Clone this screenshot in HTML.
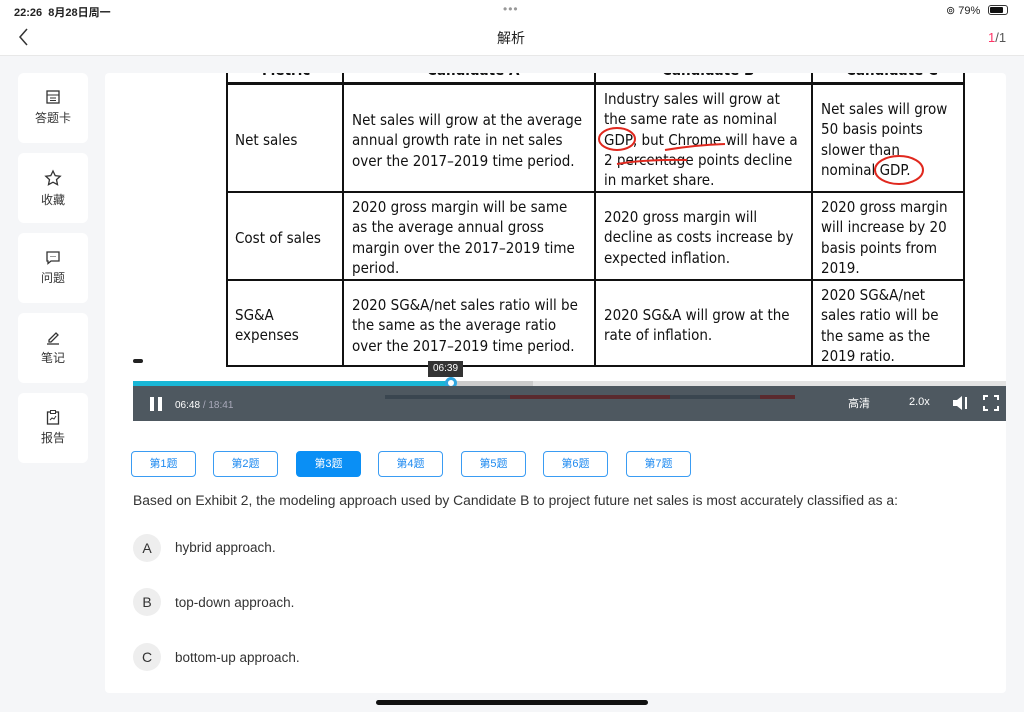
<!DOCTYPE html>
<html><head><meta charset="utf-8"><style>
*{margin:0;padding:0;box-sizing:border-box}
body{width:1024px;height:712px;background:#f5f6f8;font-family:"Liberation Sans","Noto Sans CJK SC",sans-serif;position:relative;overflow:hidden;color:#222}
.a{position:absolute}
.hdr{left:0;top:0;width:1024px;height:56px;background:#fff;border-bottom:1px solid #e8e8e8}
.side{left:18px;width:70px;height:70px;background:#fff;border-radius:6px;text-align:center;font-size:12px;color:#333}
.side svg{display:block;margin:16px auto 4px}
.card{left:105px;top:73px;width:901px;height:620px;background:#fff;border-radius:4px}
.clip{left:0;top:73px;width:1024px;height:300px;overflow:hidden}
.t{font-family:"DejaVu Sans Condensed","Liberation Sans Narrow","Liberation Sans",sans-serif;font-size:15px;line-height:20.3px;color:#111;white-space:nowrap}
.ln{background:#111}
.btn{top:451px;width:65px;height:26px;border:1px solid #3a9cf3;border-radius:4px;color:#1e8af0;font-size:11px;text-align:center;line-height:24px}
.opt{left:133px;width:28px;height:28px;border-radius:14px;background:#eee;text-align:center;line-height:28px;font-size:14px;color:#333}
.ot{left:175px;font-size:13.5px;color:#333}
</style></head><body>
<div class="a hdr"></div>
<div class="a" style="left:14px;top:4px;font-size:11px;font-weight:bold">22:26&nbsp; 8月28日周一</div>
<div class="a" style="left:503px;top:2px;font-size:12px;color:#999;letter-spacing:1px">•••</div>
<div class="a" style="left:946px;top:4px;font-size:11px">⊚ 79%</div>
<div class="a" style="left:988px;top:5px;width:20px;height:10px;border:1px solid #333;border-radius:3px"><div style="margin:1px;width:13px;height:6px;background:#111;border-radius:1px"></div></div>
<svg class="a" style="left:18px;top:28px" width="12" height="18"><path d="M9 1L2 9l7 8" stroke="#333" stroke-width="1.5" fill="none"/></svg>
<div class="a" style="left:497px;top:28px;font-size:14px">解析</div>
<div class="a" style="left:988px;top:30px;font-size:13px;color:#555"><span style="color:#f36">1</span>/1</div>

<div class="a side" style="top:73px"><svg width="16" height="16"><rect x="2" y="2" width="12" height="12" fill="none" stroke="#333" stroke-width="1.3"/><path d="M2 6h12M5 9h6M5 11.5h6" stroke="#333"/></svg>答题卡</div>
<div class="a side" style="top:153px"><svg width="18" height="18"><path d="M9 2l2.2 4.6 5 .6-3.7 3.4 1 5L9 13.2 4.5 15.6l1-5L1.8 7.2l5-.6z" fill="none" stroke="#333" stroke-width="1.3"/></svg>收藏</div>
<div class="a side" style="top:233px"><svg width="16" height="16"><path d="M2 3h12v9H6l-3 2.5V12H2z" fill="none" stroke="#333" stroke-width="1.3"/><path d="M5.5 7.5h1M7.5 7.5h1M9.5 7.5h1" stroke="#333"/></svg>问题</div>
<div class="a side" style="top:313px"><svg width="16" height="16"><path d="M4 11l7-7 2 2-7 7H4z" fill="none" stroke="#333" stroke-width="1.3"/><path d="M2 15h12" stroke="#333" stroke-width="1.3"/></svg>笔记</div>
<div class="a side" style="top:393px"><svg width="16" height="16"><rect x="2.5" y="3" width="11" height="12" fill="none" stroke="#333" stroke-width="1.3"/><rect x="5.5" y="1.5" width="5" height="3" fill="#fff" stroke="#333"/><path d="M5 11l2-2 2 1 2-3" stroke="#333" fill="none"/></svg>报告</div>

<div class="a card"></div>
<div class="a clip"><div class="a" style="left:0;top:-73px;width:1024px;height:400px">
<div class="a ln" style="left:226px;top:60px;width:2px;height:307px"></div>
<div class="a ln" style="left:963px;top:60px;width:2px;height:307px"></div>
<div class="a ln" style="left:342px;top:60px;width:2px;height:307px"></div>
<div class="a ln" style="left:594px;top:60px;width:2px;height:307px"></div>
<div class="a ln" style="left:811px;top:60px;width:2px;height:307px"></div>
<div class="a ln" style="left:226px;top:82px;width:739px;height:3px"></div>
<div class="a ln" style="left:226px;top:191px;width:739px;height:2px"></div>
<div class="a ln" style="left:226px;top:279px;width:739px;height:2px"></div>
<div class="a ln" style="left:226px;top:365px;width:739px;height:2px"></div>
<div class="a t" style="left:262px;top:60px;font-weight:bold">Metric</div>
<div class="a t" style="left:427px;top:60px;font-weight:bold">Candidate A</div>
<div class="a t" style="left:662px;top:60px;font-weight:bold">Candidate B</div>
<div class="a t" style="left:846px;top:60px;font-weight:bold">Candidate C</div>
<div class="a t" style="left:235px;top:130px">Net sales</div>
<div class="a t" style="left:352px;top:110px">Net sales will grow at the average<br>annual growth rate in net sales<br>over the 2017–2019 time period.</div>
<div class="a t" style="left:604px;top:89px">Industry sales will grow at<br>the same rate as nominal<br>GDP, but Chrome will have a<br>2 percentage points decline<br>in market share.</div>
<div class="a t" style="left:821px;top:99px">Net sales will grow<br>50 basis points<br>slower than<br>nominal GDP.</div>
<div class="a t" style="left:235px;top:228px">Cost of sales</div>
<div class="a t" style="left:352px;top:197px">2020 gross margin will be same<br>as the average annual gross<br>margin over the 2017–2019 time<br>period.</div>
<div class="a t" style="left:604px;top:207px">2020 gross margin will<br>decline as costs increase by<br>expected inflation.</div>
<div class="a t" style="left:821px;top:197px">2020 gross margin<br>will increase by 20<br>basis points from<br>2019.</div>
<div class="a t" style="left:235px;top:305px">SG&amp;A<br>expenses</div>
<div class="a t" style="left:352px;top:295px">2020 SG&amp;A/net sales ratio will be<br>the same as the average ratio<br>over the 2017–2019 time period.</div>
<div class="a t" style="left:604px;top:305px">2020 SG&amp;A will grow at the<br>rate of inflation.</div>
<div class="a t" style="left:821px;top:285px">2020 SG&amp;A/net<br>sales ratio will be<br>the same as the<br>2019 ratio.</div>
<svg class="a" style="left:595px;top:120px" width="340" height="70"><g fill="none" stroke="#e0281e" stroke-width="2"><ellipse cx="22" cy="19" rx="18" ry="11"/><path d="M70 30q30-5 60-6M22 44q30-5 70-4"/><ellipse cx="304" cy="50" rx="24" ry="14"/></g></svg>
</div></div>
<div class="a" style="left:133px;top:359px;width:10px;height:4px;background:#222;border-radius:2px"></div>

<div class="a" style="left:133px;top:381px;width:873px;height:5px;background:#ccc"></div>
<div class="a" style="left:533px;top:381px;width:473px;height:5px;background:#e3e3e3"></div>
<div class="a" style="left:133px;top:381px;width:318px;height:5px;background:#19b6d6"></div>
<div class="a" style="left:445px;top:377px;width:12px;height:12px;border-radius:6px;background:#fff;border:3px solid #2fa6e0"></div>
<div class="a" style="left:428px;top:361px;width:35px;height:16px;background:#333;color:#fff;font-size:10px;text-align:center;line-height:16px">06:39</div>
<div class="a" style="left:133px;top:386px;width:873px;height:35px;background:#4e5860"></div>
<div class="a" style="left:385px;top:395px;width:410px;height:4px;background:#3a4650"></div>
<div class="a" style="left:510px;top:395px;width:160px;height:4px;background:#5a2a2e"></div>
<div class="a" style="left:760px;top:395px;width:35px;height:4px;background:#5a2a2e"></div>
<div class="a" style="left:150px;top:397px;width:4px;height:14px;background:#fff"></div>
<div class="a" style="left:158px;top:397px;width:4px;height:14px;background:#fff"></div>
<div class="a" style="left:175px;top:400px;font-size:10px;color:#fff">06:48 <span style="color:#aab">/ 18:41</span></div>
<div class="a" style="left:848px;top:395px;font-size:11px;color:#fff">高清</div>
<div class="a" style="left:909px;top:396px;font-size:11px;color:#fff">2.0x</div>
<svg class="a" style="left:952px;top:395px" width="18" height="16"><path d="M1 5h4l5-4v14l-5-4H1z" fill="#fff"/><path d="M14 2v12" stroke="#fff" stroke-width="2"/></svg>
<svg class="a" style="left:983px;top:395px" width="16" height="16" fill="none" stroke="#fff" stroke-width="2"><path d="M1 5V1h4M11 1h4v4M15 11v4h-4M5 15H1v-4"/></svg>

<div class="a btn" style="left:131px">第1题</div>
<div class="a btn" style="left:213px">第2题</div>
<div class="a btn" style="left:296px;background:#0a8ff5;color:#fff;border-color:#0a8ff5">第3题</div>
<div class="a btn" style="left:378px">第4题</div>
<div class="a btn" style="left:461px">第5题</div>
<div class="a btn" style="left:543px">第6题</div>
<div class="a btn" style="left:626px">第7题</div>

<div class="a" style="left:133px;top:492px;font-size:13.85px;color:#333;white-space:nowrap">Based on Exhibit 2, the modeling approach used by Candidate B to project future net sales is most accurately classified as a:</div>
<div class="a opt" style="top:534px">A</div><div class="a ot" style="top:540px">hybrid approach.</div>
<div class="a opt" style="top:588px">B</div><div class="a ot" style="top:595px">top-down approach.</div>
<div class="a opt" style="top:643px">C</div><div class="a ot" style="top:650px">bottom-up approach.</div>
<div class="a" style="left:376px;top:700px;width:272px;height:5px;border-radius:3px;background:#111"></div>
</body></html>
